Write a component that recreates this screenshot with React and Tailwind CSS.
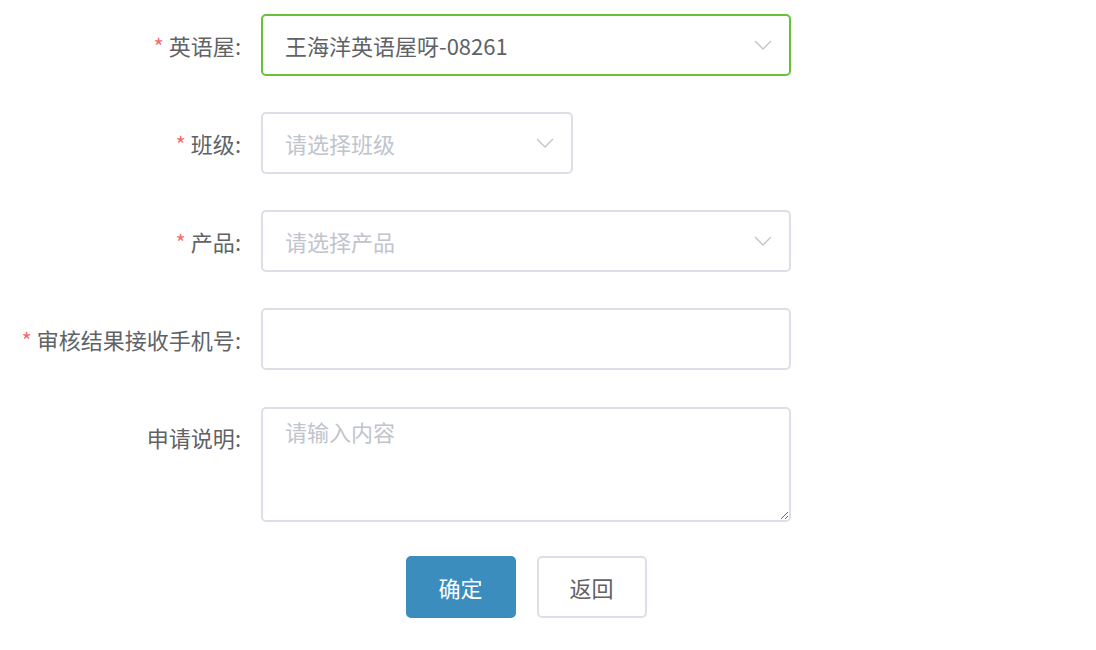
import React from "react";

const Chevron = () => (
  <svg width="18" height="10" viewBox="0 0 18 10" className="shrink-0">
    <path d="M1 1 L9 9 L17 1" fill="none" stroke="#c0c4cc" strokeWidth="1.4" />
  </svg>
);

const Row = ({ label, required, top, children }) => (
  <div className={`flex ${top ? "items-start" : "items-center"}`}>
    <label
      className={`w-[261px] shrink-0 pr-[20px] text-right text-[22px] text-[#606266] leading-[30px] ${
        top ? "pt-[15px]" : ""
      }`}
    >
      {required && <span className="text-[#f56c6c] mr-[5px]">*</span>}
      {label}:
    </label>
    {children}
  </div>
);

const Select = ({ value, placeholder, width, focused }) => (
  <div
    className={`${width} h-[62px] rounded-[5px] border-2 ${
      focused ? "border-[#67c23a]" : "border-[#dcdfe6]"
    } bg-white flex items-center justify-between pl-[22px] pr-[17px]`}
  >
    <span className={`text-[22px] ${value ? "text-[#606266]" : "text-[#c0c4cc]"}`}>
      {value || placeholder}
    </span>
    <Chevron />
  </div>
);

export default function App() {
  return (
    <div
      className="w-[1096px] h-[650px] bg-white pt-[14px]"
      style={{ fontFamily: '"Noto Sans CJK SC", "Noto Sans", sans-serif' }}
    >
      <div className="flex flex-col gap-[36px]">
        <Row label="英语屋" required>
          <Select width="w-[530px]" value="王海洋英语屋呀-08261" focused />
        </Row>
        <Row label="班级" required>
          <Select width="w-[312px]" placeholder="请选择班级" />
        </Row>
        <Row label="产品" required>
          <Select width="w-[530px]" placeholder="请选择产品" />
        </Row>
        <div className="flex flex-col gap-[37px]">
          <Row label="审核结果接收手机号" required>
            <input className="w-[530px] h-[62px] rounded-[5px] border-2 border-[#dcdfe6] px-[22px] text-[22px] text-[#606266] outline-none" />
          </Row>
          <Row label="申请说明" top>
            <textarea
              placeholder="请输入内容"
              className="w-[530px] h-[115px] rounded-[5px] border-2 border-[#dcdfe6] px-[22px] py-[7px] text-[22px] leading-[30px] text-[#606266] placeholder:text-[#c0c4cc] outline-none"
            />
          </Row>
        </div>
      </div>
      <div className="flex mt-[34px]">
        <div className="w-[261px] shrink-0" />
        <div className="w-[530px] flex justify-center gap-[21px]">
          <button className="w-[110px] h-[62px] rounded-[5px] bg-[#3a8dbd] text-white text-[22px]">
            确定
          </button>
          <button className="w-[110px] h-[62px] rounded-[5px] border-2 border-[#dcdfe6] bg-white text-[#606266] text-[22px]">
            返回
          </button>
        </div>
      </div>
    </div>
  );
}
